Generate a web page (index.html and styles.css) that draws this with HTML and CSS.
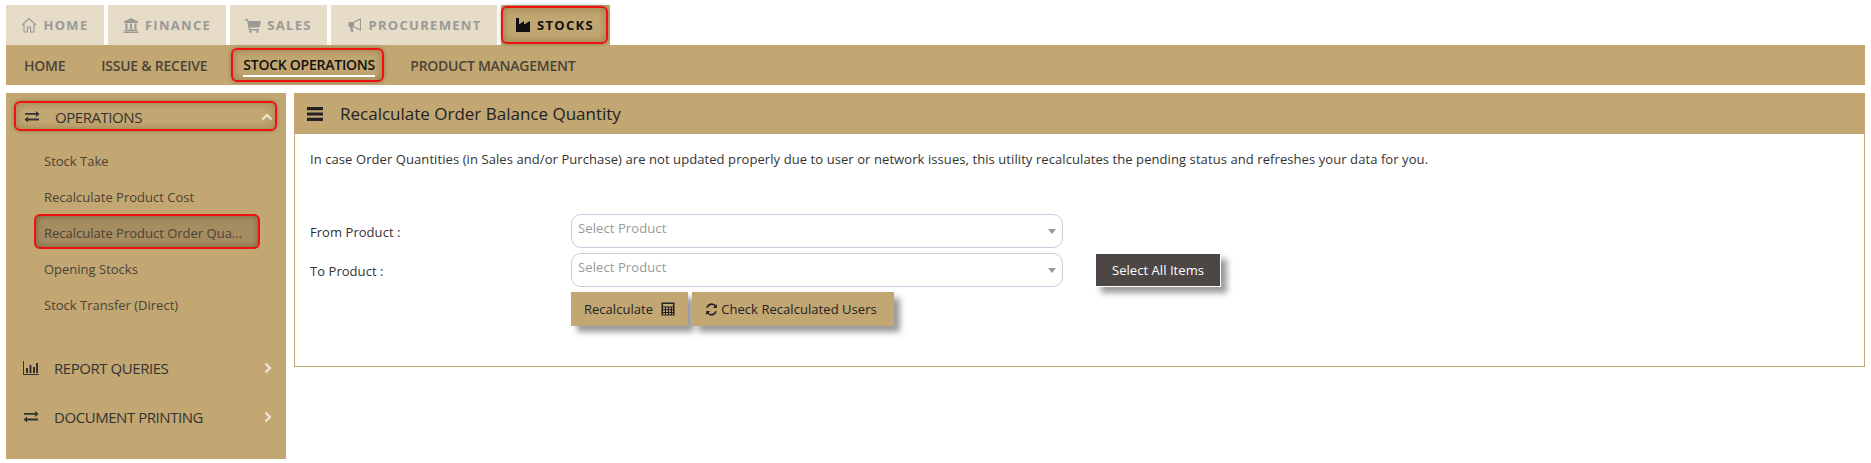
FILE: index.html
```html
<!DOCTYPE html>
<html lang="en">
<head>
<meta charset="utf-8">
<title>Recalculate Order Balance Quantity</title>
<link rel="stylesheet" href="styles.css">
</head>
<body>
<nav class="tabs">
  <a class="tab tab-home"><svg class="ti" viewBox="0 0 16 16"><path d="M1 8l7-6.500 7 6.500M3 7v8h3.500v-5h3v5H13V7" fill="none" stroke="currentColor" stroke-width="1.100"/></svg>HOME</a>
  <a class="tab tab-fin"><svg class="ti" viewBox="0 0 16 16"><path d="M8 1L1 4.500V6h14V4.500zM2.500 6.500h2V12h-2zM7 6.500h2V12H7zM11.500 6.500h2V12h-2zM1.500 12.500h13V14h-13zM.5 14.500h15V16H.5z" fill="currentColor"/></svg>FINANCE</a>
  <a class="tab tab-sales"><svg class="ti" viewBox="0 0 16 16"><path d="M0 2h3l.5 2H16l-1.500 6.500H5l.3 1.500H14v1.500H4L2 3.500H0z" fill="currentColor"/><circle cx="5.500" cy="14.800" r="1.200" fill="currentColor"/><circle cx="12.500" cy="14.800" r="1.200" fill="currentColor"/></svg>SALES</a>
  <a class="tab tab-proc"><svg class="ti" viewBox="0 0 16 16"><path d="M14 1L6 5H1.500v5H3l1 5h2.500L5.500 10H6l8 4zM13 3v9L7 9.200V5.800z" fill="currentColor" fill-rule="evenodd"/></svg>PROCUREMENT</a>
  <a class="tab tab-stocks"><span class="tab-in"><svg class="ti" viewBox="0 0 16 16"><path d="M1 1h3v6.500L9 4v3.500L15 4v11H1z" fill="currentColor"/></svg>STOCKS</span></a>
</nav>
<nav class="subnav">
  <a class="sub sub-home">HOME</a>
  <a class="sub sub-issue">ISSUE &amp; RECEIVE</a>
  <a class="sub sub-active"><span>STOCK OPERATIONS</span></a>
  <a class="sub sub-prod">PRODUCT MANAGEMENT</a>
</nav>
<div class="layout">
  <aside class="side">
    <div class="group group-open">
      <svg class="gi" viewBox="0 0 16 16"><path d="M1 4.500h11V2.500l3.500 3-3.500 3V6.200H1zM15 10H4V8l-3.500 3L4 14v-2h11z" fill="currentColor" transform="translate(0 -.5)"/></svg>
      <span class="gl">OPERATIONS</span>
      <svg class="chev" viewBox="0 0 12 12"><path d="M1.500 8.500L6 4l4.500 4.500" fill="none" stroke="currentColor" stroke-width="2"/></svg>
    </div>
    <ul class="menu">
      <li class="item">Stock Take</li>
      <li class="item">Recalculate Product Cost</li>
      <li class="item item-active">Recalculate Product Order Qua...</li>
      <li class="item">Opening Stocks</li>
      <li class="item">Stock Transfer (Direct)</li>
    </ul>
    <div class="group group-report">
      <svg class="gi" viewBox="0 0 16 16"><path d="M0 1h1v13h15v1H0zM3 8h2v5H3zM6.500 5h2v8h-2zM10 7h2v6h-2zM13 3h2v10h-2z" fill="currentColor"/></svg>
      <span class="gl">REPORT QUERIES</span>
      <svg class="chev" viewBox="0 0 12 12"><path d="M3.500 1.500L8 6l-4.500 4.500" fill="none" stroke="currentColor" stroke-width="2"/></svg>
    </div>
    <div class="group group-doc">
      <svg class="gi" viewBox="0 0 16 16"><path d="M1 4.500h11V2.500l3.500 3-3.500 3V6.200H1zM15 10H4V8l-3.500 3L4 14v-2h11z" fill="currentColor" transform="translate(0 -.5)"/></svg>
      <span class="gl">DOCUMENT PRINTING</span>
      <svg class="chev" viewBox="0 0 12 12"><path d="M3.500 1.500L8 6l-4.500 4.500" fill="none" stroke="currentColor" stroke-width="2"/></svg>
    </div>
  </aside>
  <main class="main">
    <header class="head">
      <svg class="burger" viewBox="0 0 16 13" preserveAspectRatio="none"><path d="M0 0h16v3H0zM0 5h16v3H0zM0 10h16v3H0z" fill="currentColor"/></svg>
      <h1 class="title">Recalculate Order Balance Quantity</h1>
    </header>
    <section class="panel">
      <p class="intro">In case Order Quantities (in Sales and/or Purchase) are not updated properly due to user or network issues, this utility recalculates the pending status and refreshes your data for you.</p>
      <div class="form">
        <label class="lab">From Product :</label>
        <div class="select"><span>Select Product</span><i class="caret"></i></div>
        <label class="lab">To Product :</label>
        <div class="select-row">
          <div class="select"><span>Select Product</span><i class="caret"></i></div>
          <button class="btn btn-dark">Select All Items</button>
        </div>
        <div class="actions">
          <button class="btn btn-tan btn-recalc">Recalculate<svg class="bi" viewBox="0 0 14 14"><path d="M.5.500h13v13H.5zM2 2v2.500h10V2zM2 5.500v1.800h2V5.500zm3 0v1.800h2V5.500zm3 0v1.800h1.800V5.500zm3 0v1.800h1V5.500zM2 8.300v1.800h2V8.300zm3 0v1.800h2V8.300zm3 0v1.800h1.800V8.300zm3 0v1.800h1V8.300zM2 11v1.500h2V11zm3 0v1.500h2V11zm3 0v1.500h1.800V11zm3 0v1.500h1V11z" fill="currentColor" fill-rule="evenodd"/></svg></button>
          <button class="btn btn-tan btn-check"><svg class="bi2" viewBox="0 0 14 14"><path d="M12.800 1v4.300H8.500l1.700-1.700A4.300 4.300 0 0 0 3.100 5H1.200a6 6 0 0 1 10.200-2.700zM1.200 13V8.700h4.300l-1.700 1.700A4.300 4.300 0 0 0 10.900 9h1.900a6 6 0 0 1-10.200 2.700z" fill="currentColor"/></svg>Check Recalculated Users</button>
        </div>
      </div>
    </section>
  </main>
</div>
</body>
</html>
```
FILE: styles.css
```css
* { box-sizing: border-box; }
html, body { margin: 0; height: 463px; overflow: hidden; background: #fff; }
body {
  font-family: "Open Sans", "Noto Sans", "Liberation Sans", sans-serif;
  font-size: 13px;
  color: #333;
  padding: 5px 6px 0 6px;
}
.tabs { display: flex; height: 40px; gap: 4px; }
.tab {
  display: flex;
  align-items: center;
  justify-content: center;
  gap: 6px;
  background: #e6dcc8;
  color: #9a9a96;
  font-weight: 700;
  font-size: 13px;
  letter-spacing: 1.300px;
}
.ti { width: 16px; height: 16px; flex: none; }
.tab-home { width: 98px; }
.tab-fin { width: 118px; }
.tab-sales { width: 97px; }
.tab-proc { width: 166px; }
.tab-stocks {
  width: 109px;
  background: #c2a772;
  color: #111;
  padding: 1px 2px 1px 0;
  align-items: stretch;
}
.tab-in {
  flex: 1;
  display: flex;
  align-items: center;
  justify-content: center;
  gap: 6px;
  border: 2px solid #f01010;
  border-radius: 6px;
  box-shadow: inset 0 0 8px rgba(90, 70, 30, .45), 0 0 4px rgba(0, 0, 0, .3);
}
.subnav {
  display: flex;
  align-items: center;
  height: 40px;
  background: #c2a772;
  color: #4b4336;
  font-size: 14px;
  font-weight: 600;
}
.sub { display: block; letter-spacing: -.25px; white-space: nowrap; }
.sub-home { margin-left: 18px; }
.sub-issue { margin-left: 36px; }
.sub-active {
  margin-left: 24px;
  width: 153px;
  height: 34px;
  border: 2px solid #f01010;
  border-radius: 6px;
  color: #111;
  padding-top: 5px;
  padding-left: 10px;
  box-shadow: inset 0 0 8px rgba(90, 70, 30, .45), 0 0 4px rgba(0, 0, 0, .3);
}
.sub-active span { display: inline-block; border-bottom: 2px solid #fff; line-height: 20px; }
.sub-prod { margin-left: 26px; }
.layout { display: flex; margin-top: 8px; gap: 8px; align-items: flex-start; }
.side {
  width: 280px;
  height: 366px;
  background: #c2a772;
  padding-top: 8px;
  color: #333;
}
.group {
  display: flex;
  align-items: center;
  height: 30px;
  font-size: 15px;
}
.group-open {
  margin: 0 9px 0 8px;
  width: 263px;
  border: 2px solid #f01010;
  border-radius: 6px;
  padding: 1px 2px 0 8px;
  box-shadow: inset 0 0 8px rgba(90, 70, 30, .4), 0 0 4px rgba(0, 0, 0, .3);
}
.gi { width: 16px; height: 16px; flex: none; }
.gl { margin-left: 15px; flex: 1; letter-spacing: -.45px; }
.chev { width: 12px; height: 12px; color: #efe8da; flex: none; }
.group-report, .group-doc { padding: 0 12px 0 17px; }
.group-report { margin-top: 30px; }
.group-doc { margin-top: 19px; }
.menu { list-style: none; margin: 12px 0 0; padding: 0; }
.item {
  height: 36px;
  line-height: 36px;
  padding-left: 38px;
  color: #4b4336;
  font-size: 13px;
  letter-spacing: 0;
  white-space: nowrap;
}
.item-active {
  width: 226px;
  height: 35px;
  margin: -1px 0 2px 28px;
  padding-left: 8px;
  line-height: 34px;
  background: #a58c61;
  border: 2px solid #f01010;
  border-radius: 6px;
  box-shadow: inset 0 0 6px rgba(70, 50, 20, .5);
}
.main { flex: 1; min-width: 0; }
.head {
  display: flex;
  align-items: center;
  height: 41px;
  background: #c2a772;
  padding-left: 13px;
  color: #222;
}
.burger { width: 16px; height: 14px; flex: none; }
.title { margin: 0 0 0 17px; font-size: 17px; font-weight: 400; }
.panel {
  height: 233px;
  border: 1px solid #c2a772;
  border-top: 0;
  padding: 0 15px;
}
.intro { margin: 0; padding-top: 16px; line-height: 18px; font-size: 13px; letter-spacing: .08px; color: #333; white-space: nowrap; }
.form {
  display: grid;
  grid-template-columns: 261px 1fr;
  row-gap: 5px;
  margin-top: 46px;
}
.lab { font-size: 13px; letter-spacing: .05px; color: #333; line-height: 18px; padding-top: 9px; }
.select-row { display: flex; align-items: center; }
.select {
  width: 492px;
  height: 34px;
  border: 1px solid #c6cbdc;
  border-radius: 10px;
  background: #fff;
  position: relative;
  padding: 4px 6px;
  color: #999;
  font-size: 13px;
  line-height: 18px;
  letter-spacing: .1px;
}
.caret {
  position: absolute;
  right: 6px;
  top: 14px;
  border: 4px solid transparent;
  border-top: 5px solid #999;
  border-bottom: 0;
}
.btn {
  border: 0;
  font: inherit;
  font-size: 13px;
  letter-spacing: .05px;
  height: 34px;
  padding: 0;
  display: flex;
  align-items: center;
  justify-content: center;
  box-shadow: 6px 6px 6px rgba(0, 0, 0, .4);
}
.btn-dark {
  margin-left: 32px;
  width: 126px;
  background: #4c4644;
  color: #fff;
  border: 1px solid #fff;
}
.actions { grid-column: 2; display: flex; gap: 4px; }
.btn-tan { background: #c2a772; color: #222; }
.btn-recalc { width: 117px; gap: 8px; }
.btn-check { width: 202px; gap: 3px; padding-right: 4px; }
.bi { width: 14px; height: 14px; flex: none; }
.bi2 { width: 13px; height: 13px; flex: none; }
```
